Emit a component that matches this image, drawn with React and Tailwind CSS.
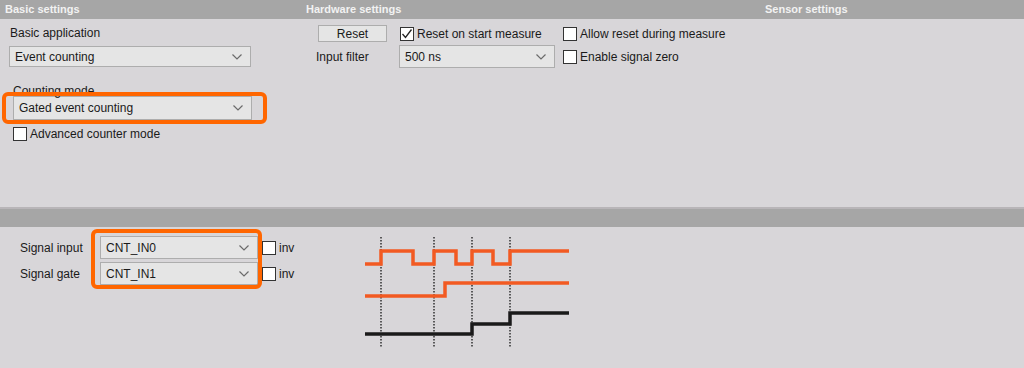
import React from "react";

const Chevron = () => (
    <svg width="10" height="6" viewBox="0 0 10 6" className="shrink-0">
        <path d="M0.5 0.5 L5 5 L9.5 0.5" fill="none" stroke="#6b6b6b" strokeWidth="1.2" />
    </svg>
);

const Select = ({ value, className = "" }) => (
    <div className={`flex items-center justify-between border border-[#adadad] bg-[#e5e5e5] pl-[5px] pr-[8px] text-[#1a1a1a] ${className}`}>
        <span>{value}</span>
        <Chevron />
    </div>
);

const Checkbox = ({ checked = false }) => (
    <div className="w-[14px] h-[14px] shrink-0 border border-[#333] bg-white flex items-center justify-center">
        {checked && (
            <svg width="12" height="12" viewBox="0 0 12 12">
                <path d="M1.5 6 L4.5 9.5 L10.5 1.5" fill="none" stroke="#222" strokeWidth="1.3" />
            </svg>
        )}
    </div>
);

const CheckLabel = ({ checked, label, className = "" }) => (
    <div className={`flex items-center gap-[3px] ${className}`}>
        <Checkbox checked={checked} />
        <span className="text-[#1a1a1a]">{label}</span>
    </div>
);

const Header = ({ text, className = "" }) => (
    <div className={`h-[19px] bg-[#a6a6a6] flex items-center text-[11px] font-bold text-[#f2f2f2] ${className}`}>
        {text}
    </div>
);

const Waveform = () => {
    const orange = "#f25a22";
    return (
        <svg width="210" height="112" viewBox="0 0 210 112">
            {[16, 69, 107, 145].map((x) => (
                <line key={x} x1={x} y1="2" x2={x} y2="112" stroke="#3a3a3a" strokeWidth="1.6" strokeDasharray="1.5 1.5" />
            ))}
            <path d="M0 29 H16 V16 H48 V29 H69 V16 H91 V29 H107 V16 H128 V29 H145 V16 H204" fill="none" stroke={orange} strokeWidth="3.5" />
            <path d="M0 61 H80 V48 H204" fill="none" stroke={orange} strokeWidth="3.5" />
            <path d="M0 99 H107 V89 H145 V78 H204" fill="none" stroke="#1a1a1a" strokeWidth="3.5" />
        </svg>
    );
};

export default function App() {
    return (
        <div className="w-[1024px] h-[368px] bg-[#d8d6d9] text-[12px] overflow-hidden" style={{ fontFamily: "'Liberation Sans', Arial, sans-serif" }}>
            {/* top settings area */}
            <div className="h-[207px] flex">
                {/* Basic settings */}
                <div className="w-[300px] relative">
                    <Header text="Basic settings" className="pl-[5px]" />
                    <div className="pl-[9px]">
                        <div className="mt-[7px] h-[14px] leading-[14px] pl-[1px] text-[#1a1a1a]">Basic application</div>
                        <Select value="Event counting" className="mt-[6px] w-[242px] h-[21px]" />
                        <div className="mt-[17px] h-[12px] leading-[14px] pl-[4px] text-[#1a1a1a]">Counting mode</div>
                        <Select value="Gated event counting" className="ml-[4px] w-[239px] h-[24px]" />
                        <CheckLabel label="Advanced counter mode" className="mt-[5px] ml-[4px]" />
                    </div>
                    <div className="absolute left-[2px] top-[92px] w-[265px] h-[32px] border-4 border-[#ff6600] rounded-md" />
                </div>

                {/* Hardware settings */}
                <div className="w-[459px]">
                    <Header text="Hardware settings" className="pl-[6px]" />
                    <div className="mt-[6px] flex items-center h-[17px]">
                        <div className="ml-[18px] w-[69px] h-[17px] border border-[#adadad] bg-[#e5e5e5] flex items-center justify-center text-[#1a1a1a]">Reset</div>
                        <CheckLabel checked label="Reset on start measure" className="ml-[13px] w-[163px]" />
                        <CheckLabel label="Allow reset during measure" />
                    </div>
                    <div className="mt-[3px] flex items-center h-[23px]">
                        <div className="ml-[16px] w-[83px] text-[#1a1a1a]">Input filter</div>
                        <Select value="500 ns" className="w-[156px] h-[23px]" />
                        <CheckLabel label="Enable signal zero" className="ml-[8px]" />
                    </div>
                </div>

                {/* Sensor settings */}
                <div className="flex-1">
                    <Header text="Sensor settings" className="pl-[6px]" />
                </div>
            </div>

            {/* divider bar */}
            <div className="h-[20px] bg-[#a6a6a6] border-t-2 border-[#b8b5b8]" />

            {/* signal area */}
            <div className="flex">
                <div className="w-[365px] relative pl-[20px] pt-[9px]">
                    <div className="flex items-center h-[23px]">
                        <div className="w-[80px] text-[#1a1a1a]">Signal input</div>
                        <Select value="CNT_IN0" className="w-[158px] h-[23px]" />
                        <CheckLabel label="inv" className="ml-[4px]" />
                    </div>
                    <div className="mt-[3px] flex items-center h-[23px]">
                        <div className="w-[80px] text-[#1a1a1a]">Signal gate</div>
                        <Select value="CNT_IN1" className="w-[158px] h-[23px]" />
                        <CheckLabel label="inv" className="ml-[4px]" />
                    </div>
                    <div className="absolute left-[91px] top-[2px] w-[171px] h-[60px] border-4 border-[#ff6600] rounded-md" />
                </div>
                <div className="pt-[8px]">
                    <Waveform />
                </div>
            </div>
        </div>
    );
}
